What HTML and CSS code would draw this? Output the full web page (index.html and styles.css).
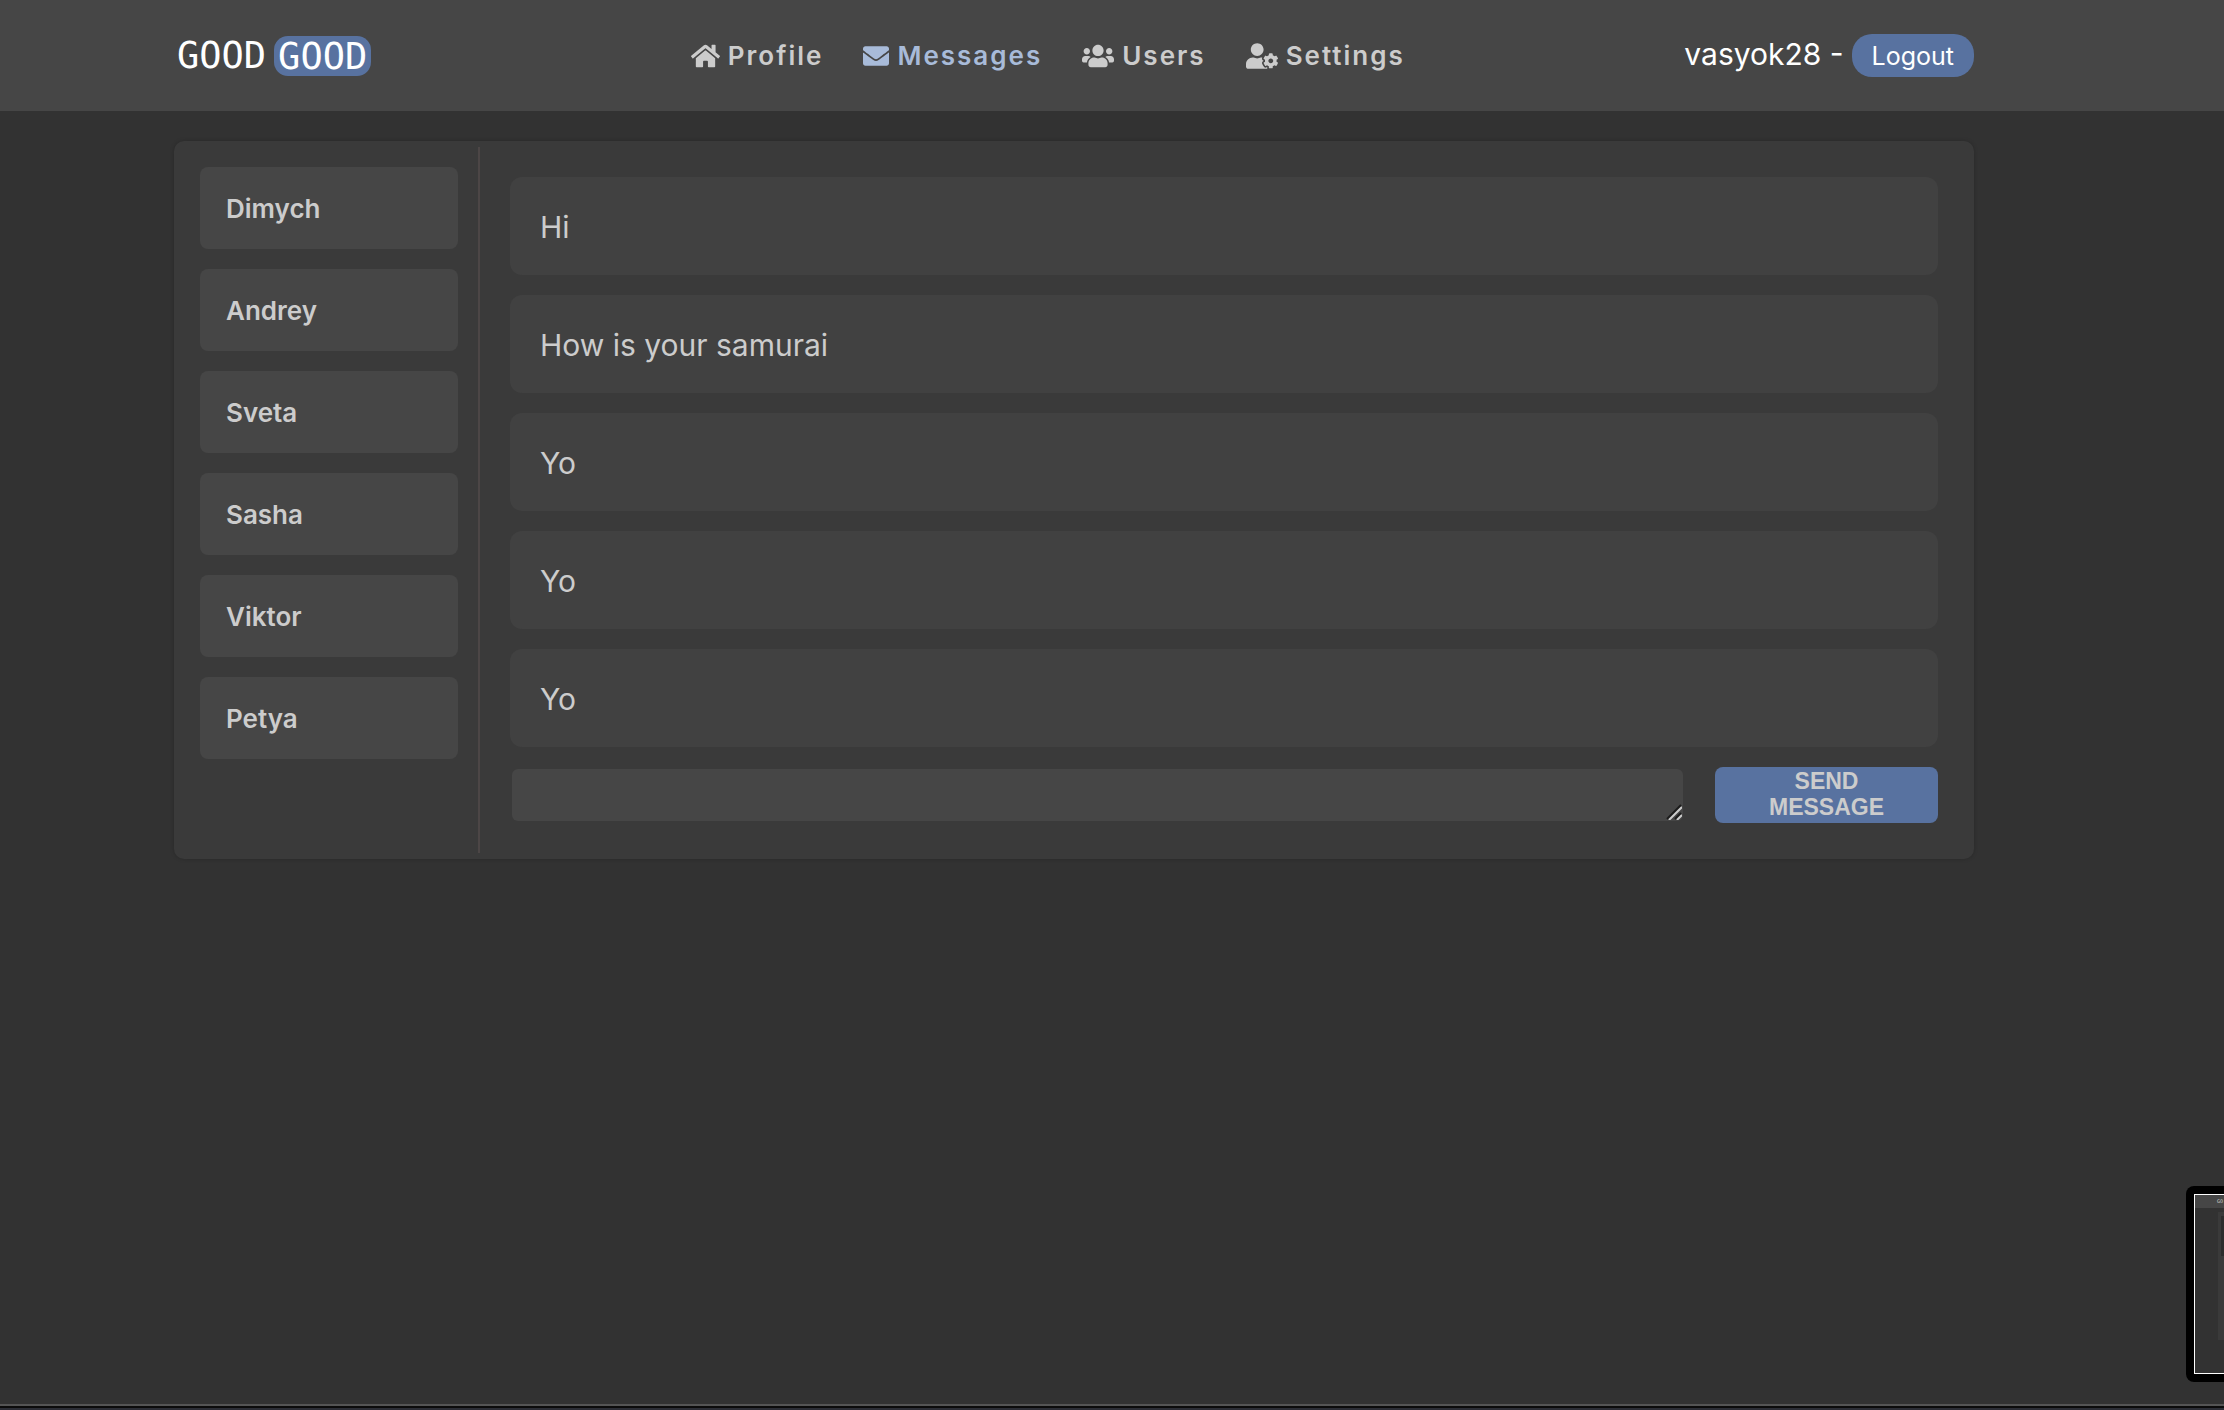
FILE: index.html
```html
<!DOCTYPE html>
<html lang="en">
<head>
<meta charset="utf-8">
<meta name="viewport" content="width=device-width, initial-scale=1">
<title>Messages</title>
<link rel="stylesheet" href="styles.css">
</head>
<body>
<header class="header">
  <div class="container header-row">
    <a class="logo" href="#">GOOD <span class="logo-badge">GOOD</span></a>
    <nav class="nav">
      <a class="nav-link" href="#"><svg class="icon" width="29" height="26" viewBox="0 0 576 512" aria-hidden="true"><path d="M280.37 148.26L96 300.11V464a16 16 0 0 0 16 16l112.06-.29a16 16 0 0 0 15.92-16V368a16 16 0 0 1 16-16h64a16 16 0 0 1 16 16v95.64a16 16 0 0 0 16 16.05L464 480a16 16 0 0 0 16-16V300L295.67 148.26a12.19 12.19 0 0 0-15.3 0zM571.6 251.47L488 182.56V44.05a12 12 0 0 0-12-12h-56a12 12 0 0 0-12 12v72.61L318.47 43a48 48 0 0 0-61 0L4.34 251.47a12 12 0 0 0-1.6 16.9l25.5 31A12 12 0 0 0 45.15 301l235.22-193.74a12.19 12.19 0 0 1 15.3 0L530.9 301a12 12 0 0 0 16.9-1.6l25.5-31a12 12 0 0 0-1.7-16.93z"/></svg>Profile</a>
      <a class="nav-link nav-link-active" href="#"><svg class="icon" width="26" height="26" viewBox="0 0 512 512" aria-hidden="true"><path d="M502.3 190.8c3.9-3.1 9.7-.2 9.7 4.7V400c0 26.5-21.5 48-48 48H48c-26.5 0-48-21.5-48-48V195.6c0-5 5.7-7.8 9.7-4.7 22.4 17.4 52.1 39.5 154.1 113.6 21.1 15.4 56.7 47.8 92.2 47.6 35.7.3 72-32.8 92.3-47.6 102-74.1 131.6-96.3 154-113.7zM256 320c23.2.4 56.6-29.2 73.4-41.4 132.7-96.3 142.8-104.7 173.4-128.7 5.8-4.5 9.2-11.5 9.2-18.9v-19c0-26.5-21.5-48-48-48H48c-26.5 0-48 21.5-48 48v19c0 7.4 3.4 14.3 9.2 18.9 30.6 23.9 40.7 32.4 173.4 128.7 16.8 12.2 50.2 41.8 73.4 41.4z"/></svg>Messages</a>
      <a class="nav-link" href="#"><svg class="icon" width="32" height="26" viewBox="0 0 640 512" aria-hidden="true"><path d="M96 224c35.3 0 64-28.7 64-64s-28.7-64-64-64-64 28.7-64 64 28.7 64 64 64zm448 0c35.3 0 64-28.7 64-64s-28.7-64-64-64-64 28.7-64 64 28.7 64 64 64zm32 32h-64c-17.6 0-33.5 7.1-45.1 18.6 40.3 22.1 68.9 62 75.1 109.4h66c17.7 0 32-14.3 32-32v-32c0-35.3-28.7-64-64-64zm-256 0c61.9 0 112-50.1 112-112S381.9 32 320 32 208 82.1 208 144s50.1 112 112 112zm76.8 32h-8.3c-20.8 10-43.9 16-68.5 16s-47.6-6-68.5-16h-8.3C179.6 288 128 339.6 128 403.2V432c0 26.5 21.5 48 48 48h288c26.5 0 48-21.5 48-48v-28.8c0-63.6-51.6-115.2-115.2-115.2zm-223.7-13.4C161.5 263.1 145.6 256 128 256H64c-35.3 0-64 28.7-64 64v32c0 17.7 14.3 32 32 32h65.9c6.3-47.4 34.9-87.3 75.2-109.4z"/></svg>Users</a>
      <a class="nav-link" href="#"><svg class="icon" width="32" height="26" viewBox="0 0 640 512" aria-hidden="true"><path d="M610.5 373.3c2.6-14.1 2.6-28.5 0-42.6l25.8-14.9c3-1.7 4.3-5.2 3.3-8.5-6.7-21.6-18.2-41.2-33.2-57.4-2.3-2.5-6-3.1-9-1.4l-25.8 14.9c-10.9-9.3-23.4-16.5-36.9-21.3v-29.8c0-3.4-2.4-6.4-5.7-7.1-22.3-5-45-4.8-66.2 0-3.3.7-5.7 3.7-5.7 7.1v29.8c-13.5 4.8-26 12-36.9 21.3l-25.8-14.9c-2.9-1.7-6.7-1.1-9 1.4-15 16.2-26.5 35.8-33.2 57.4-1 3.3.4 6.8 3.3 8.5l25.8 14.9c-2.6 14.1-2.6 28.5 0 42.6l-25.8 14.9c-3 1.7-4.3 5.2-3.3 8.5 6.7 21.6 18.2 41.1 33.2 57.4 2.3 2.5 6 3.1 9 1.4l25.8-14.9c10.9 9.3 23.4 16.5 36.9 21.3v29.8c0 3.4 2.4 6.4 5.7 7.1 22.3 5 45 4.8 66.2 0 3.3-.7 5.7-3.7 5.7-7.1v-29.8c13.5-4.8 26-12 36.9-21.3l25.8 14.9c2.9 1.7 6.7 1.1 9-1.4 15-16.2 26.5-35.8 33.2-57.4 1-3.3-.4-6.8-3.3-8.5l-25.8-14.9zM496 400.5c-26.8 0-48.5-21.8-48.5-48.5s21.8-48.5 48.5-48.5 48.5 21.8 48.5 48.5-21.7 48.5-48.5 48.5zM224 256c70.7 0 128-57.3 128-128S294.7 0 224 0 96 57.3 96 128s57.3 128 128 128zm201.2 226.5c-2.3-1.2-4.6-2.6-6.8-3.9l-7.9 4.6c-6 3.4-12.8 5.3-19.6 5.3-10.9 0-21.4-4.6-28.9-12.6-18.3-19.8-32.3-43.9-40.2-69.6-5.5-17.7 1.9-36.4 17.9-45.7l7.9-4.6c-.1-2.6-.1-5.2 0-7.8l-7.9-4.6c-16-9.2-23.4-28-17.9-45.7.9-2.9 2.2-5.8 3.2-8.7-3.8-.3-7.5-1.2-11.4-1.2h-16.7c-22.2 10.2-46.9 16-72.9 16s-50.6-5.8-72.9-16h-16.7C60.2 288 0 348.2 0 422.4V464c0 26.5 21.5 48 48 48h352c10.1 0 19.5-3.2 27.2-8.5-1.2-3.8-2-7.7-2-11.8v-9.2z"/></svg>Settings</a>
    </nav>
    <div class="account">
      <span class="user">vasyok28 -</span>
      <button class="logout" type="button">Logout</button>
    </div>
  </div>
</header>
<main class="container card">
  <nav class="dialogs">
    <a class="dialog" href="#">Dimych</a>
    <a class="dialog" href="#">Andrey</a>
    <a class="dialog" href="#">Sveta</a>
    <a class="dialog" href="#">Sasha</a>
    <a class="dialog" href="#">Viktor</a>
    <a class="dialog" href="#">Petya</a>
  </nav>
  <section class="chat">
    <div class="message">Hi</div>
    <div class="message">How is your samurai</div>
    <div class="message">Yo</div>
    <div class="message">Yo</div>
    <div class="message">Yo</div>
    <form class="composer">
      <div class="field">
        <textarea class="input" aria-label="Message"></textarea>
        <svg class="grip" width="16" height="16" viewBox="0 0 16 16" aria-hidden="true"><path class="grip-dark" d="M1 15L15 1M9 15L15 9"/><path class="grip-light" d="M3 16L16 3M11 16L16 11"/></svg>
      </div>
      <button class="send" type="submit">SEND MESSAGE</button>
    </form>
  </section>
</main>
<aside class="preview" aria-hidden="true">
  <div class="preview-screen">
    <div class="preview-bar">GO</div>
    <div class="preview-card"><div class="preview-block"></div></div>
  </div>
</aside>
<div class="window-edge"></div>
</body>
</html>
```
FILE: styles.css
```css
* { box-sizing: border-box; }

body {
  margin: 0;
  min-height: 100vh;
  position: relative;
  overflow-x: hidden;
  background: #323232;
  color: #cccccc;
  font-family: Inter, "Liberation Sans", sans-serif;
}

a { color: inherit; text-decoration: none; }

button { border: 0; font: inherit; cursor: pointer; }

.container {
  width: 81%;
  margin-left: max(8px, calc(50% - 938px));
  max-width: 1800px;
}

.header {
  height: 111px;
  background: #464646;
}

.header-row {
  height: 100%;
  display: flex;
  justify-content: space-between;
  align-items: center;
}

.logo {
  display: flex;
  align-items: center;
  gap: 8px;
  margin-right: 40px;
  padding-left: 3px;
  color: #ffffff;
  font-family: "DejaVu Sans Mono", monospace;
  font-size: 37px;
  line-height: 38px;
}

.logo, .logo-badge { padding-top: 2px; }

.logo { padding-top: 0; }

.logo-badge {
  padding-left: 4px;
  padding-right: 4px;
  border-radius: 14px;
  background: #5872a0;
}

.nav { display: flex; gap: 40px; }

.nav-link {
  display: flex;
  align-items: center;
  gap: 8px;
  font-size: 26px;
  font-weight: 600;
  letter-spacing: 2px;
}

.nav-link-active { color: #a8bbd9; }

.icon { fill: currentColor; }

.account {
  display: flex;
  align-items: center;
  gap: 8px;
  color: #ffffff;
}

.user {
  padding-bottom: 4px;
  font-size: 30px;
}

.logout {
  height: 43px;
  padding: 0 20px;
  border-radius: 20px;
  background: #5872a0;
  color: #ffffff;
  font-size: 25px;
}

.card {
  display: grid;
  grid-template-columns: 300px 1fr;
  margin-top: 30px;
  padding: 6px;
  border-radius: 10px;
  background: #3a3a3a;
  box-shadow: 0 0 4px rgba(0, 0, 0, 0.2);
}

.dialogs {
  display: flex;
  flex-direction: column;
  gap: 20px;
  padding: 20px;
  border-right: 2px solid #4c4646;
}

.dialog {
  padding: 27px 26px 25px;
  border-radius: 8px;
  background: #464646;
  font-size: 26px;
  font-weight: 600;
  line-height: 30px;
}

.chat {
  display: flex;
  flex-direction: column;
  gap: 20px;
  padding: 30px;
}

.message {
  padding: 31px 30px 29px;
  border-radius: 12px;
  background: #414141;
  font-size: 30px;
  line-height: 38px;
}

.composer {
  display: flex;
  align-items: center;
  gap: 32px;
}

.field { position: relative; flex: 1; height: 52px; margin-left: 2px; }

.input {
  display: block;
  width: 100%;
  height: 100%;
  border: 0;
  border-radius: 6px;
  background: #464646;
  color: inherit;
  font: inherit;
  resize: none;
}

.grip {
  position: absolute;
  right: 1px;
  bottom: 1px;
  fill: none;
  stroke-width: 2;
}

.grip-dark { stroke: #1c1c1c; }
.grip-light { stroke: #cccccc; }

.send {
  width: 223px;
  height: 56px;
  padding: 0 50px 2px;
  border-radius: 8px;
  background: #5872a0;
  color: #cccccc;
  font-family: "Liberation Sans", Arial, sans-serif;
  font-size: 23px;
  font-weight: 700;
  line-height: 26px;
}

.preview {
  position: absolute;
  right: 0;
  bottom: 28px;
  width: 38px;
  height: 196px;
  padding: 8px 0 8px 8px;
  border-radius: 8px 0 0 8px;
  background: #000000;
}

.preview-screen {
  height: 180px;
  overflow: hidden;
  border: 1px solid #ffffff;
  border-right: 0;
  background: #323232;
}

.preview-bar {
  height: 13px;
  padding-left: 22px;
  background: #464646;
  color: #cccccc;
  font-family: "DejaVu Sans Mono", monospace;
  font-size: 5px;
  line-height: 13px;
}

.preview-card {
  height: 128px;
  margin: 4px 0 0 23px;
  padding: 4px 0 0 3px;
  background: #3a3a3a;
}

.preview-block { height: 40px; background: #2c2c2c; }

.window-edge {
  position: absolute;
  left: 0;
  right: 0;
  bottom: 0;
  height: 6px;
  border-top: 2px solid #555555;
  border-bottom: 2px solid #2c2e36;
  background: #0c0c0c;
}
```
